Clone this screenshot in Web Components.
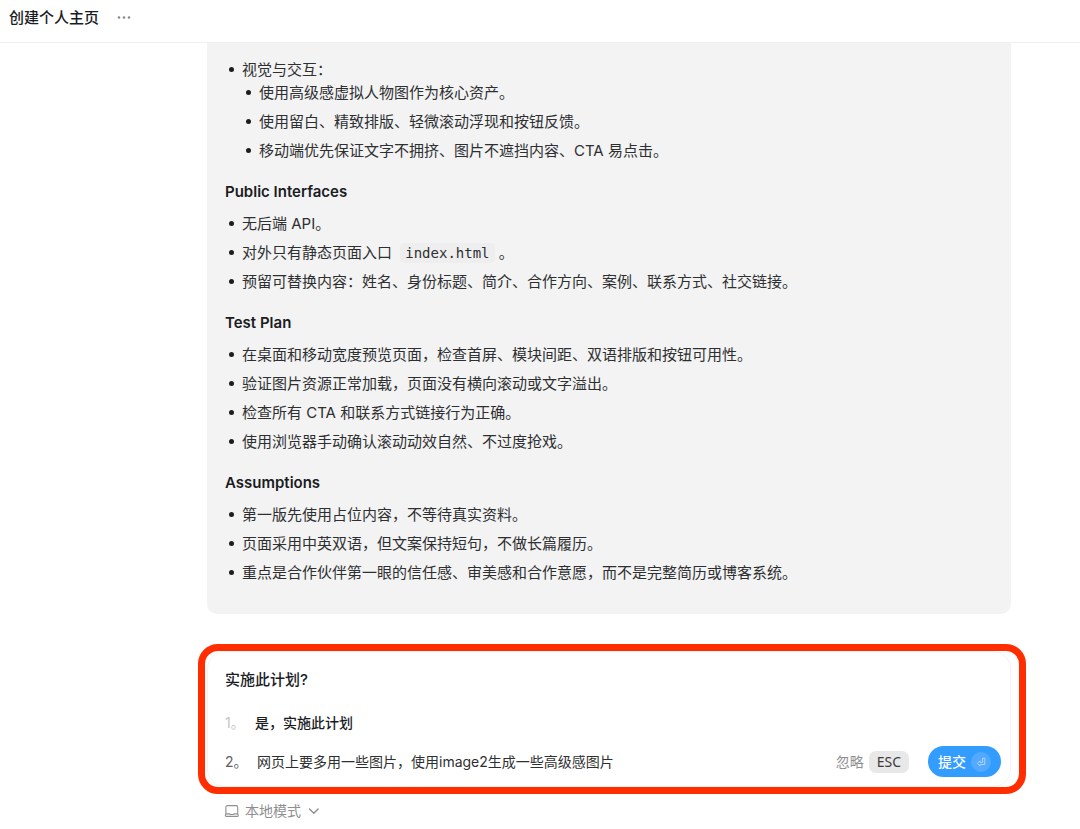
<!DOCTYPE html>
<html lang="zh-CN">
<head>
<meta charset="utf-8">
<meta name="viewport" content="width=device-width, initial-scale=1">
<title>创建个人主页</title>
<style>
  body {
    margin: 0;
    background: #fff;
    color: #2e2f31;
    font-family: "Inter", "Noto Sans CJK SC", sans-serif;
    font-size: 15px;
    line-height: 23px;
  }
</style>
</head>
<body>
<thread-page>
  <thread-header slot="header">创建个人主页</thread-header>
  <plan-card>
    <plan-section>
      <plan-item>视觉与交互：
        <plan-list slot="children">
          <plan-item>使用高级感虚拟人物图作为核心资产。</plan-item>
          <plan-item>使用留白、精致排版、轻微滚动浮现和按钮反馈。</plan-item>
          <plan-item>移动端优先保证文字不拥挤、图片不遮挡内容、CTA 易点击。</plan-item>
        </plan-list>
      </plan-item>
    </plan-section>
    <plan-section heading="Public Interfaces">
      <plan-item>无后端 API。</plan-item>
      <plan-item>对外只有静态页面入口 <inline-code>index.html</inline-code>。</plan-item>
      <plan-item>预留可替换内容：姓名、身份标题、简介、合作方向、案例、联系方式、社交链接。</plan-item>
    </plan-section>
    <plan-section heading="Test Plan">
      <plan-item>在桌面和移动宽度预览页面，检查首屏、模块间距、双语排版和按钮可用性。</plan-item>
      <plan-item>验证图片资源正常加载，页面没有横向滚动或文字溢出。</plan-item>
      <plan-item>检查所有 CTA 和联系方式链接行为正确。</plan-item>
      <plan-item>使用浏览器手动确认滚动动效自然、不过度抢戏。</plan-item>
    </plan-section>
    <plan-section heading="Assumptions">
      <plan-item>第一版先使用占位内容，不等待真实资料。</plan-item>
      <plan-item>页面采用中英双语，但文案保持短句，不做长篇履历。</plan-item>
      <plan-item>重点是合作伙伴第一眼的信任感、审美感和合作意愿，而不是完整简历或博客系统。</plan-item>
    </plan-section>
  </plan-card>
  <highlight-frame>
    <confirm-card>
      <span slot="title">实施此计划?</span>
      <plan-option number="1" primary>是，实施此计划</plan-option>
      <plan-option number="2">网页上要多用一些图片，使用image2生成一些高级感图片
        <confirm-actions slot="actions"></confirm-actions>
      </plan-option>
    </confirm-card>
  </highlight-frame>
  <mode-picker>本地模式</mode-picker>
</thread-page>

<script>
  const define = (name, html, setup) => {
    const template = document.createElement('template');
    template.innerHTML = html;
    customElements.define(name, class extends HTMLElement {
      constructor() {
        super();
        this.attachShadow({ mode: 'open' }).append(template.content.cloneNode(true));
      }
      connectedCallback() {
        if (setup) setup(this, this.shadowRoot);
      }
    });
  };

  define('thread-page', `
    <style>
      :host { display: block; }
      main { padding: 0 54px 0 198px; }
    </style>
    <slot name="header"></slot>
    <main><slot></slot></main>
  `);

  define('thread-header', `
    <style>
      :host { display: block; border-bottom: 1px solid #f0f0f0; }
      header { display: flex; align-items: center; gap: 17px; padding: 6px 9px 12px; }
      h1 { margin: 0; font-size: 15px; line-height: 24px; font-weight: 500; color: #1a1c1f; }
      button { display: flex; padding: 0; border: 0; background: none; color: #8b8b8d; }
      svg { width: 16px; height: 16px; }
    </style>
    <header>
      <h1><slot></slot></h1>
      <button type="button" aria-label="更多">
        <svg viewBox="0 0 16 16" fill="currentColor" aria-hidden="true">
          <circle cx="3" cy="7.5" r="1.3"/><circle cx="8" cy="7.5" r="1.3"/><circle cx="13" cy="7.5" r="1.3"/>
        </svg>
      </button>
    </header>
  `);

  define('plan-card', `
    <style>
      :host {
        display: flex; flex-direction: column; gap: 18px;
        margin: 0 15px 30px 9px; padding: 15px 18px 30px;
        background: #f3f3f3; border-radius: 0 0 10px 10px;
      }
    </style>
    <slot></slot>
  `);

  define('plan-section', `
    <style>
      :host { display: block; }
      h2 { margin: 0 0 9px; font-size: 15px; line-height: 23px; font-weight: 600; color: #1a1c1f; }
      h2[hidden] { display: none; }
      div { display: flex; flex-direction: column; gap: 6px; }
    </style>
    <h2 hidden></h2>
    <div role="list"><slot></slot></div>
  `, (host, root) => {
    const title = root.querySelector('h2');
    title.textContent = host.getAttribute('heading') || '';
    title.hidden = !host.hasAttribute('heading');
  });

  define('plan-list', `
    <style>
      :host { display: flex; flex-direction: column; gap: 6px; }
    </style>
    <slot></slot>
  `, host => host.setAttribute('role', 'list'));

  define('plan-item', `
    <style>
      :host { display: grid; grid-template-columns: 17px 1fr; }
      i { width: 5px; height: 5px; margin: 9px 0 0 4px; border-radius: 50%; background: #1a1c1f; }
    </style>
    <i></i>
    <div><slot></slot><slot name="children"></slot></div>
  `, host => host.setAttribute('role', 'listitem'));

  define('inline-code', `
    <style>
      :host { display: inline; line-height: 1; }
      code {
        margin: 0 0 0 4px; padding: 2px 5px; border-radius: 5px; background: #eeeeee;
        font-family: "DejaVu Sans Mono", monospace; font-size: 14px;
      }
    </style>
    <code><slot></slot></code>
  `);

  define('highlight-frame', `
    <style>
      :host { display: block; border: 7px solid #ff2d00; border-radius: 20px; }
    </style>
    <slot></slot>
  `);

  define('confirm-card', `
    <style>
      :host {
        display: block; margin: 0 8px 0 2px; padding: 16px 9px 9px 17px;
        border: 1px solid #f3f3f5; border-radius: 18px;
      }
      h2 { margin: 0 0 19px; font-size: 15px; line-height: 24px; font-weight: 500; color: #1a1c1f; }
      div { display: flex; flex-direction: column; gap: 11px; }
    </style>
    <h2><slot name="title"></slot></h2>
    <div role="list"><slot></slot></div>
  `);

  define('plan-option', `
    <style>
      :host { display: flex; align-items: center; font-size: 14px; line-height: 24px; }
      .number { width: 32px; flex: none; color: #5d5d5f; }
      .text { flex: 1; }
      :host([primary]) .text { font-weight: 500; color: #1a1c1f; }
      :host([primary]) .number { width: 30px; color: #c4c4c6; }
    </style>
    <span class="number"></span>
    <span class="text"><slot></slot></span>
    <slot name="actions"></slot>
  `, (host, root) => {
    host.setAttribute('role', 'listitem');
    root.querySelector('.number').textContent = host.getAttribute('number') + '。';
  });

  define('confirm-actions', `
    <style>
      :host { display: flex; align-items: center; gap: 19px; }
      button {
        display: flex; align-items: center; gap: 5px; padding: 0; border: 0;
        background: none; font: inherit; line-height: 21px; color: #8f8f91;
      }
      kbd {
        padding: 0 8px; border-radius: 7px; background: #e8e8e8; color: #3a3a3c;
        font-family: "Noto Sans", sans-serif; font-size: 14px; line-height: 22px;
      }
      .submit {
        padding: 5px 10px; border-radius: 16px; background: #339cff;
        color: #fff; font-weight: 500;
      }
      .key { display: flex; padding: 5px; border-radius: 10px; background: #52a9ff; }
      svg { width: 10px; height: 10px; }
    </style>
    <button type="button">忽略<kbd>ESC</kbd></button>
    <button type="button" class="submit">提交<span class="key">
      <svg viewBox="0 0 12 12" fill="none" stroke="#c2e0ff" stroke-width="1" stroke-linejoin="round" aria-hidden="true">
        <path d="M8 1.5h2.5v7.5H5v1.7L1.5 7.7 5 4.7v1.8h3z"/>
      </svg></span></button>
  `);

  define('mode-picker', `
    <style>
      :host { display: flex; margin: 5px 0 0 26px; }
      button {
        display: flex; align-items: center; gap: 5px; padding: 0; border: 0;
        background: none; font: inherit; font-size: 14px; line-height: 24px; color: #8f8f91;
      }
      svg { width: 16px; height: 16px; }
    </style>
    <button type="button" aria-haspopup="menu">
      <svg viewBox="0 0 16 16" fill="none" stroke="currentColor" stroke-width="1.1" stroke-linejoin="round" aria-hidden="true">
        <path d="M1.9 11V4.2a1.6 1.6 0 0 1 1.6-1.6h8.6a1.6 1.6 0 0 1 1.6 1.6V11l.5 1.1a.9.9 0 0 1-.8 1.3H2.2a.9.9 0 0 1-.8-1.3z"/>
        <path d="M1.9 10.9h3.7l.6.6h3.2l.6-.6h3.7"/>
      </svg>
      <slot></slot>
      <svg viewBox="0 0 16 16" fill="none" stroke="currentColor" stroke-width="1.4" stroke-linecap="round" stroke-linejoin="round" aria-hidden="true">
        <path d="M3.5 6l4.3 4.3L12.1 6"/>
      </svg>
    </button>
  `);
</script>
</body>
</html>
